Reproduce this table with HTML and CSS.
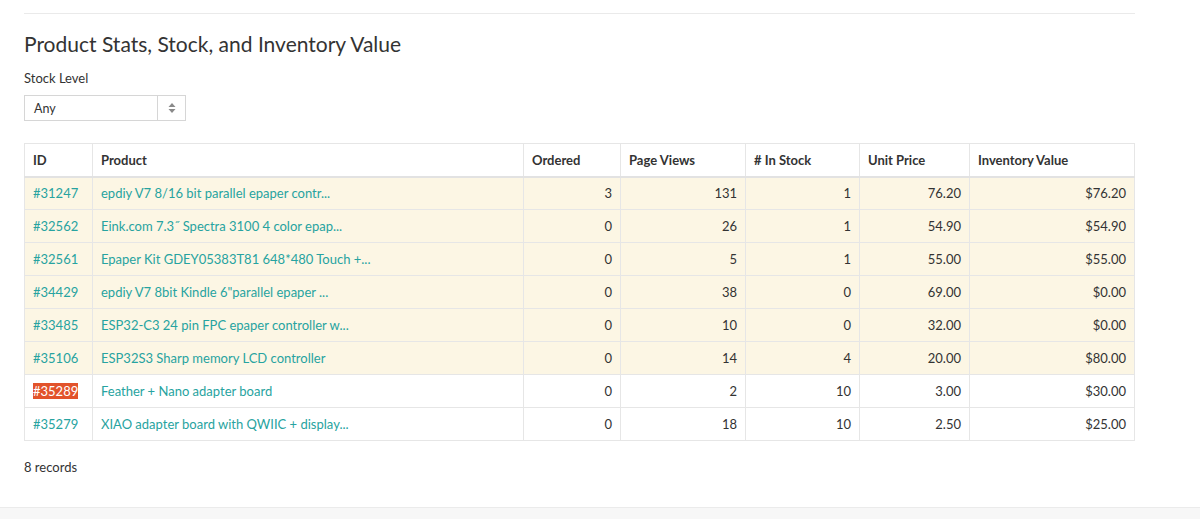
FILE: index.html
```html
<!DOCTYPE html>
<html>
<head>
<meta charset="utf-8">
<link rel="stylesheet" href="styles.css">
</head>
<body>
<main class="page">
  <hr class="rule">
  <h2 class="title">Product Stats, Stock, and Inventory Value</h2>
  <label class="field-label">Stock Level</label>
  <div class="select">
    <span class="select-value">Any</span>
    <span class="select-arrow">
      <svg width="8" height="12" viewBox="0 0 8 12"><path d="M4 1 L7.5 5 H0.5 Z M4 11 L7.5 7 H0.5 Z" fill="#8a8a8a"/></svg>
    </span>
  </div>
  <table class="stats">
    <thead>
      <tr>
        <th class="c-id">ID</th>
        <th class="c-prod">Product</th>
        <th class="c-ord">Ordered</th>
        <th class="c-pv">Page Views</th>
        <th class="c-st">#&nbsp;In Stock</th>
        <th class="c-up">Unit Price</th>
        <th class="c-iv">Inventory Value</th>
      </tr>
    </thead>
    <tbody>
      <tr class="low"><td><a>#31247</a></td><td><a>epdiy V7 8/16 bit parallel epaper contr...</a></td><td class="num">3</td><td class="num">131</td><td class="num">1</td><td class="num">76.20</td><td class="num">$76.20</td></tr>
      <tr class="low"><td><a>#32562</a></td><td><a>Eink.com 7.3˝ Spectra 3100 4 color epap...</a></td><td class="num">0</td><td class="num">26</td><td class="num">1</td><td class="num">54.90</td><td class="num">$54.90</td></tr>
      <tr class="low"><td><a>#32561</a></td><td><a>Epaper Kit GDEY05383T81 648*480 Touch +...</a></td><td class="num">0</td><td class="num">5</td><td class="num">1</td><td class="num">55.00</td><td class="num">$55.00</td></tr>
      <tr class="low"><td><a>#34429</a></td><td><a>epdiy V7 8bit Kindle 6"parallel epaper ...</a></td><td class="num">0</td><td class="num">38</td><td class="num">0</td><td class="num">69.00</td><td class="num">$0.00</td></tr>
      <tr class="low"><td><a>#33485</a></td><td><a>ESP32-C3 24 pin FPC epaper controller w...</a></td><td class="num">0</td><td class="num">10</td><td class="num">0</td><td class="num">32.00</td><td class="num">$0.00</td></tr>
      <tr class="low"><td><a>#35106</a></td><td><a>ESP32S3 Sharp memory LCD controller</a></td><td class="num">0</td><td class="num">14</td><td class="num">4</td><td class="num">20.00</td><td class="num">$80.00</td></tr>
      <tr><td><a class="hl">#35289</a></td><td><a>Feather + Nano adapter board</a></td><td class="num">0</td><td class="num">2</td><td class="num">10</td><td class="num">3.00</td><td class="num">$30.00</td></tr>
      <tr><td><a>#35279</a></td><td><a>XIAO adapter board with QWIIC + display...</a></td><td class="num">0</td><td class="num">18</td><td class="num">10</td><td class="num">2.50</td><td class="num">$25.00</td></tr>
    </tbody>
  </table>
  <p class="count">8 records</p>
</main>
<footer class="footer"></footer>
</body>
</html>
```
FILE: styles.css
```css
html, body {
  margin: 0;
  padding: 0;
  background: #fff;
}
body {
  font-family: Lato, "Open Sans", sans-serif;
  color: #333;
  font-size: 13px;
}
.page {
  padding: 13px 0 0 24px;
  width: 1111px;
  height: 494px;
}
.rule {
  margin: 0;
  border: 0;
  border-top: 1px solid #eaeaea;
}
.title {
  margin: 18px 0 0 0;
  font-size: 21px;
  font-weight: 400;
  line-height: 24px;
  color: #333;
}
.field-label {
  display: block;
  margin-top: 13px;
  font-size: 13px;
  line-height: 18px;
}
.select {
  margin-top: 8px;
  width: 162px;
  height: 26px;
  box-sizing: border-box;
  border: 1px solid #d6d6d6;
  display: flex;
  align-items: stretch;
}
.select-value {
  flex: 1;
  padding-left: 9px;
  line-height: 26px;
  font-size: 12.5px;
}
.select-arrow {
  width: 27px;
  border-left: 1px solid #d6d6d6;
  display: flex;
  align-items: center;
  justify-content: center;
}
.stats {
  margin-top: 22px;
  width: 1111px;
  border-collapse: collapse;
  border: 1px solid #dedede;
}
.stats th, .stats td {
  border: 1px solid #e6e6e6;
  height: 33px;
  padding: 0 8px;
  box-sizing: border-box;
  font-size: 13px;
}
.stats th {
  text-align: left;
  font-weight: 700;
  color: #333;
  border-bottom: 2px solid #e2e2e2;
  height: 33px;
}
.c-id { width: 68px; }
.c-prod { width: 431px; }
.c-ord { width: 97px; }
.c-pv { width: 125px; }
.c-st { width: 114px; }
.c-up { width: 110px; }
.stats td.num {
  text-align: right;
  color: #333;
}
.stats tr.low td {
  background: #fcf6e4;
}
.stats a {
  color: #27a3a0;
}
.stats a.hl {
  background: #e2532b;
  color: #fff;
}
.count {
  margin: 18px 0 0 0;
  font-size: 13px;
}
.footer {
  height: 25px;
  background: #f7f7f7;
  border-top: 1px solid #ebebeb;
}
```
